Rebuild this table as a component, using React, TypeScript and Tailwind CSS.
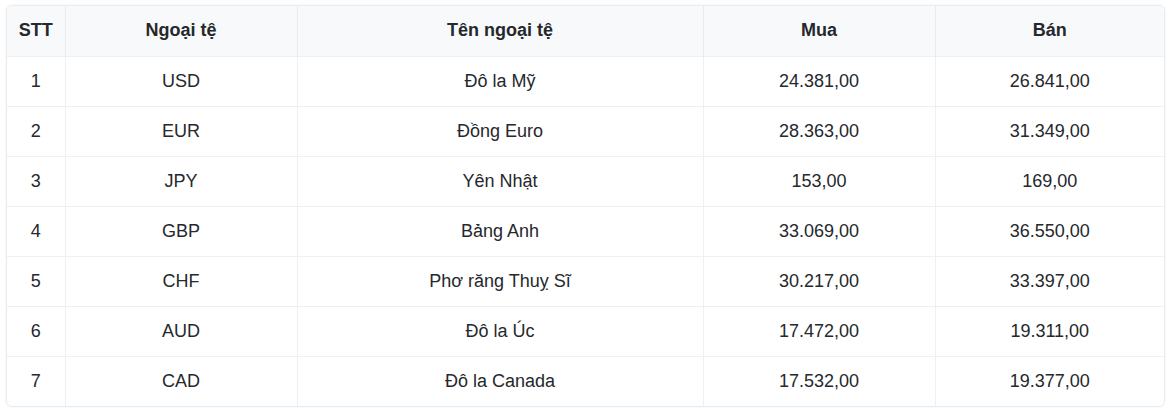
import React from "react";

const rows = [
  ["1", "USD", "Đô la Mỹ", "24.381,00", "26.841,00"],
  ["2", "EUR", "Đồng Euro", "28.363,00", "31.349,00"],
  ["3", "JPY", "Yên Nhật", "153,00", "169,00"],
  ["4", "GBP", "Bảng Anh", "33.069,00", "36.550,00"],
  ["5", "CHF", "Phơ răng Thuỵ Sĩ", "30.217,00", "33.397,00"],
  ["6", "AUD", "Đô la Úc", "17.472,00", "19.311,00"],
  ["7", "CAD", "Đô la Canada", "17.532,00", "19.377,00"],
];

export default function App() {
  return (
    <div
      className="w-[1170px] h-[408px] bg-white pt-[5px] pl-[6px] pr-[5px]"
      style={{ fontFamily: '"Liberation Sans", Arial, sans-serif' }}
    >
      <div className="rounded-[6px] border border-[#e9ecef] overflow-hidden shadow-[0_0_3px_rgba(0,0,0,0.06)]">
        <table className="w-full table-fixed border-collapse text-[18px] text-[#25282c]">
          <colgroup>
            <col className="w-[58px]" />
            <col className="w-[232px]" />
            <col className="w-[406px]" />
            <col className="w-[232px]" />
            <col />
          </colgroup>
          <thead>
            <tr className="bg-[#f8f9fa] h-[50px]">
              {["STT", "Ngoại tệ", "Tên ngoại tệ", "Mua", "Bán"].map((h, i) => (
                <th
                  key={h}
                  className={`font-bold text-center align-middle p-0 ${i > 0 ? "border-l border-[#e9ecef]" : ""}`}
                >
                  {h}
                </th>
              ))}
            </tr>
          </thead>
          <tbody>
            {rows.map((r) => (
              <tr key={r[0]} className="h-[50px] border-t border-[#eef0f2]">
                {r.map((c, i) => (
                  <td
                    key={i}
                    className={`text-center align-middle p-0 ${i > 0 ? "border-l border-[#eef0f2]" : ""}`}
                  >
                    {c}
                  </td>
                ))}
              </tr>
            ))}
          </tbody>
        </table>
      </div>
    </div>
  );
}
